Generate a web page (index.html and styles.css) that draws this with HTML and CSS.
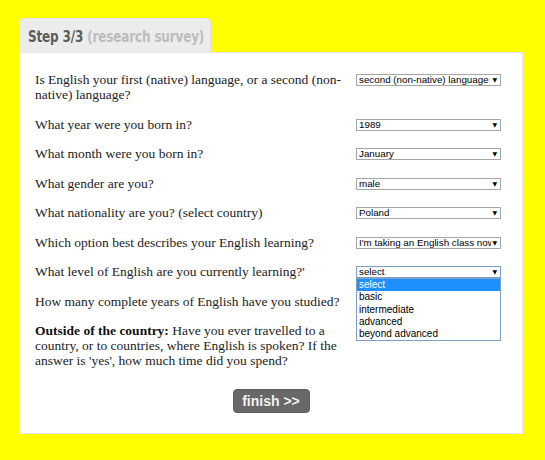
FILE: index.html
```html
<!DOCTYPE html>
<html lang="en">
<head>
<meta charset="utf-8">
<title>Step 3/3 (research survey)</title>
<link rel="stylesheet" href="styles.css">
</head>
<body>
<div class="wrap">
  <div class="tab"><span class="title"><span class="step">Step 3/3</span> <span class="sub">(research survey)</span></span></div>
  <div class="card">
    <div class="questions">
      <div class="q">Is English your first (native) language, or a second (non-native) language?</div>
      <div class="a"><span class="sel"><select><option>second (non-native) language</option></select></span></div>

      <div class="q">What year were you born in?</div>
      <div class="a"><span class="sel"><select><option>1989</option></select></span></div>

      <div class="q">What month were you born in?</div>
      <div class="a"><span class="sel"><select><option>January</option></select></span></div>

      <div class="q">What gender are you?</div>
      <div class="a"><span class="sel"><select><option>male</option></select></span></div>

      <div class="q">What nationality are you? (select country)</div>
      <div class="a"><span class="sel"><select><option>Poland</option></select></span></div>

      <div class="q">Which option best describes your English learning?</div>
      <div class="a"><span class="sel"><select><option>I'm taking an English class now</option></select></span></div>

      <div class="q">What level of English are you currently learning?'</div>
      <div class="a">
        <span class="sel open"><select><option>select</option></select>
          <ul class="list">
            <li class="active">select</li>
            <li>basic</li>
            <li>intermediate</li>
            <li>advanced</li>
            <li>beyond advanced</li>
          </ul>
        </span>
      </div>

      <div class="q">How many complete years of English have you studied?</div>
      <div class="a"></div>

      <div class="q"><b>Outside of the country:</b> Have you ever travelled to a country, or to countries, where English is spoken? If the answer is 'yes', how much time did you spend?</div>
      <div class="a"></div>
    </div>
    <div class="actions"><button class="finish" type="button">finish &gt;&gt;</button></div>
  </div>
</div>
</body>
</html>
```
FILE: styles.css
```css
html, body {
  margin: 0;
  padding: 0;
}
body {
  background: #ffff00;
  width: 545px;
  height: 460px;
  overflow: hidden;
}
.wrap {
  margin: 18px 0 0 19px;
  width: 504px;
  display: flex;
  flex-direction: column;
  align-items: flex-start;
}
.tab {
  box-sizing: border-box;
  height: 34px;
  width: 192px;
  padding: 2px 0 0 8px;
  display: flex;
  align-items: center;
  background: #ececec;
  border: 1px solid #e2e2e2;
  border-bottom: none;
  border-radius: 5px 5px 0 0;
  overflow: hidden;
}
.title {
  display: block;
  white-space: nowrap;
  font-family: "DejaVu Sans", "Liberation Sans", sans-serif;
  font-weight: bold;
  font-size: 16px;
  line-height: 18px;
  letter-spacing: -0.2px;
  transform: scaleX(0.75);
  transform-origin: left center;
}
.step { color: #5c5c5c; }
.sub { color: #bcbcbc; }
.card {
  box-sizing: border-box;
  width: 504px;
  height: 382px;
  background: #fff;
  border: 1px solid #e6e6e6;
  padding: 19px 0 0 15px;
}
.questions {
  display: grid;
  grid-template-columns: 310px 145px;
  column-gap: 11px;
  row-gap: 14.5px;
  font-family: "Liberation Serif", "Times New Roman", serif;
  font-size: 13.5px;
  line-height: 15px;
  color: #222;
}
.q b { font-weight: bold; color: #111; }
.a { position: relative; }
.sel {
  position: relative;
  display: block;
  width: 145px;
  height: 12px;
  margin-top: 2px;
}
.sel select {
  -webkit-appearance: none;
  appearance: none;
  box-sizing: border-box;
  width: 145px;
  height: 12px;
  margin: 0;
  padding: 0 9px 0 2px;
  border: 1px solid #a6a6a6;
  border-radius: 0;
  background: #fff;
  font-family: "Liberation Sans", Arial, sans-serif;
  font-size: 9.8px;
  line-height: 10px;
  color: #000;
  display: block;
}
.sel::after {
  content: "\25BC";
  position: absolute;
  right: 4px;
  top: 2px;
  font-family: "DejaVu Sans", sans-serif;
  font-size: 6px;
  line-height: 8px;
  color: #000;
  pointer-events: none;
}
.sel.open select { border-color: #7d9fc4; }
.list {
  position: absolute;
  z-index: 2;
  left: 0;
  top: 12px;
  width: 145px;
  box-sizing: border-box;
  margin: 0;
  padding: 0;
  list-style: none;
  background: #fff;
  border: 1px solid #7d9fc4;
  font-family: "Liberation Sans", Arial, sans-serif;
  font-size: 10px;
  line-height: 12.3px;
  color: #000;
}
.list li { padding-left: 2px; }
.list li.active { background: #1e90ff; color: #fff; }
.actions {
  display: flex;
  justify-content: center;
  padding-right: 15px;
  margin-top: 20.5px;
}
.finish {
  width: 77px;
  height: 24px;
  padding: 0;
  border: 1px solid #5f5f5f;
  border-radius: 4px;
  background: #686868;
  color: #f2f2f2;
  font-family: "Liberation Sans", Arial, sans-serif;
  font-weight: bold;
  font-size: 14px;
  line-height: 22px;
}
```
